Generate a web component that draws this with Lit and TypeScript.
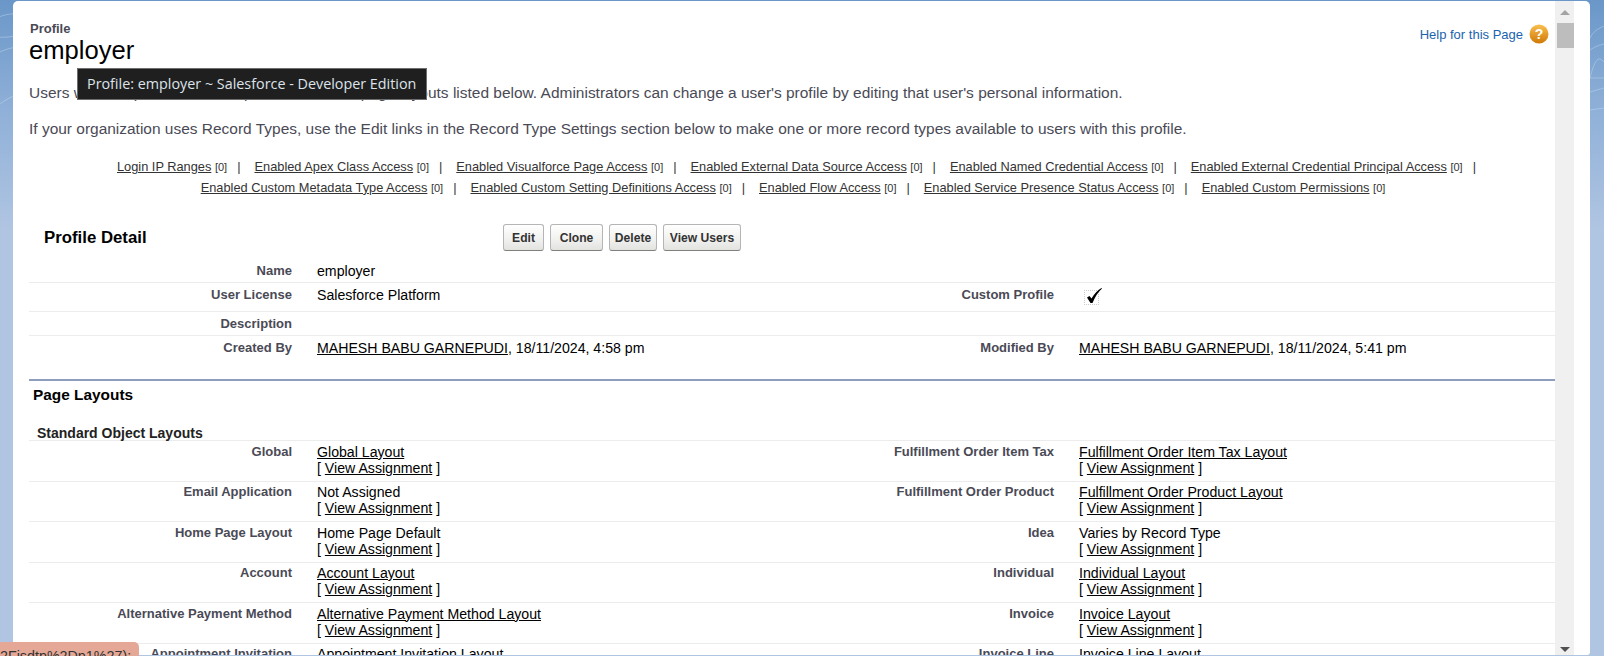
import { LitElement, html, css, svg } from "lit";
import { customElement } from "lit/decorators.js";

const links1 = [
  "Login IP Ranges",
  "Enabled Apex Class Access",
  "Enabled Visualforce Page Access",
  "Enabled External Data Source Access",
  "Enabled Named Credential Access",
  "Enabled External Credential Principal Access",
];
const links2 = [
  "Enabled Custom Metadata Type Access",
  "Enabled Custom Setting Definitions Access",
  "Enabled Flow Access",
  "Enabled Service Presence Status Access",
  "Enabled Custom Permissions",
];

type Cell = { label: string; value: string; link: boolean };
const layouts: [Cell, Cell][] = [
  [{ label: "Global", value: "Global Layout", link: true }, { label: "Fulfillment Order Item Tax", value: "Fulfillment Order Item Tax Layout", link: true }],
  [{ label: "Email Application", value: "Not Assigned", link: false }, { label: "Fulfillment Order Product", value: "Fulfillment Order Product Layout", link: true }],
  [{ label: "Home Page Layout", value: "Home Page Default", link: false }, { label: "Idea", value: "Varies by Record Type", link: false }],
  [{ label: "Account", value: "Account Layout", link: true }, { label: "Individual", value: "Individual Layout", link: true }],
  [{ label: "Alternative Payment Method", value: "Alternative Payment Method Layout", link: true }, { label: "Invoice", value: "Invoice Layout", link: true }],
  [{ label: "Appointment Invitation", value: "Appointment Invitation Layout", link: true }, { label: "Invoice Line", value: "Invoice Line Layout", link: true }],
];

@customElement("app-root")
export class AppRoot extends LitElement {
  static styles = css`
    :host {
      display: block;
      width: 1604px;
      height: 656px;
      position: relative;
      overflow: hidden;
      font-family: "Liberation Sans", Arial, sans-serif;
      background: linear-gradient(180deg, #6a97c8 0%, #8fb0d8 110px, #b0c5e2 230px, #b0c5e2 100%);
    }
    .swirl { position: absolute; inset: 0; width: 1604px; height: 300px; }
    .card {
      position: absolute;
      left: 13px;
      top: 1px;
      width: 1577px;
      height: 654px;
      background: #fff;
      border-radius: 5px 5px 3px 3px;
      display: flex;
      overflow: hidden;
    }
    .content {
      width: 1542px;
      flex: none;
      overflow: hidden;
      color: #000;
      font-size: 14.15px;
    }
    .sb {
      width: 19px;
      flex: none;
      background: #f0f0f0;
      display: flex;
      flex-direction: column;
      align-items: center;
      position: relative;
    }
    .sb-up { margin-top: 9px; width: 0; height: 0; border-left: 5px solid transparent; border-right: 5px solid transparent; border-bottom: 5px solid #a3a3a3; }
    .sb-thumb { margin: 8px 0 0 2px; width: 17px; height: 25px; background: #bdbdbd; }
    .sb-down { margin-top: auto; margin-bottom: 3px; width: 0; height: 0; border-left: 5px solid transparent; border-right: 5px solid transparent; border-top: 5px solid #505050; }

    .head { display: flex; justify-content: space-between; padding: 21px 6px 0 16px; height: 46px; box-sizing: content-box; }
    .kicker { font-size: 13px; font-weight: 700; color: #4a4a56; line-height: 14px; margin-left: 1px; }
    .title { font-size: 25.6px; line-height: 30px; color: #000; margin-top: -1px; }
    .help { display: flex; align-items: center; gap: 6px; height: 24px; }
    .help a { font-size: 13px; color: #1a63ae; text-decoration: none; }

    .para { margin: 0 0 0 16px; color: #4a4a56; font-size: 15.47px; line-height: 16px; }
    .p1 { margin-top: 17px; }
    .p2 { margin-top: 20px; }

    .rel { margin-top: 20px; text-align: center; color: #333; font-size: 12.8px; line-height: 20.5px; padding: 0 0 0 18px; }
    .rel a { color: #333; text-decoration: underline; }
    .rel .n { font-size: 11px; }
    .rel .sep { margin: 0 14px 0 10px; }
    .rel .last { margin-right: 0; }
    .rel .first { padding-left: 7px; }

    .pd { display: flex; align-items: center; margin: 26px 0 0 0; height: 27px; padding-left: 31px; }
    .pd h2 { margin: 0; width: 459px; font-size: 16.8px; line-height: 20px; font-weight: 700; color: #000; }
    .btns { display: flex; gap: 6px; }
    .btn {
      font: 700 12.1px "Liberation Sans", Arial, sans-serif;
      color: #333;
      height: 27px;
      padding: 0;
      box-sizing: border-box;
      border: 1px solid #b5b5b5;
      border-bottom-color: #7f7f7f;
      border-radius: 3px;
      background: linear-gradient(#fff, #f0f0ee 60%, #e2e2df);
    }
    .b-edit { width: 41px; }
    .b-clone { width: 53px; }
    .b-delete { width: 48px; }
    .b-users { width: 78px; }

    .detail { margin: 7px 0 0 16px; }
    .row {
      display: grid;
      grid-template-columns: 263px 500px 262px 1fr;
      border-bottom: 1px solid #ececec;
      box-sizing: border-box;
      line-height: 16px;
    }
    .row:last-child { border-bottom: none; }
    .r1 { height: 25px; padding-top: 5px; }
    .r2 { height: 29px; padding-top: 4px; }
    .r3 { height: 24px; padding-top: 4px; }
    .r4 { height: 24px; padding-top: 4px; }
    .l { font-size: 13px; font-weight: 700; color: #4a4a56; text-align: right; line-height: 16px; }
    .v { padding-left: 25px; color: #000; white-space: nowrap; }
    .v a { color: #000; text-decoration: underline; }

    .sect { margin: 19px 0 0 16px; border-top: 2px solid #8e9dbe; padding: 5px 0 0 4px; font-size: 15.4px; font-weight: 700; line-height: 17px; color: #000; }
    .sub { margin: 22px 0 0 24px; font-size: 14px; font-weight: 700; color: #222; line-height: 16px; }
    .layouts { margin: -1px 0 0 16px; border-top: 1px solid #ececec; }
    .lrow { display: grid; grid-template-columns: 263px 500px 262px 1fr; border-bottom: 1px solid #ececec; height: 40.5px; box-sizing: border-box; padding-top: 2.5px; line-height: 16.2px; }
    .chk { display: inline-block; margin: 3px 0 0 5px; width: 15px; height: 15px; border: 1px dotted #ccc; box-sizing: border-box; position: relative; }
    .chk svg { position: absolute; left: -1px; top: -5px; }

    .tip {
      position: absolute;
      left: 77px;
      top: 68px;
      width: 350px;
      height: 32px;
      box-sizing: border-box;
      background: #1f1f1f;
      border: 1px solid #6e6e6e;
      color: #dde3ea;
      font: 14.35px "Open Sans", "Liberation Sans", sans-serif;
      line-height: 29px;
      padding-left: 9px;
      white-space: nowrap;
    }
    .status {
      position: absolute;
      left: 0;
      top: 642px;
      width: 139px;
      height: 14px;
      background: #e5a896;
      border-top-right-radius: 5px;
      font-size: 14.3px;
      line-height: 28px;
      color: #333;
      white-space: nowrap;
      overflow: hidden;
    }
  `;

  private swirl() {
    const strokes = [
      "M-10 22 C 6 10 30 12 40 22 C 30 34 10 40 -10 36",
      "M-10 58 C 6 46 26 44 40 50",
      "M0 104 C 10 96 24 92 34 86",
      "M1590 38 C 1594 30 1600 28 1604 26",
      "M1590 50 C 1596 46 1600 45 1604 44",
      "M1590 78 C 1596 54 1600 58 1604 62 M1590 78 L1604 78",
      "M1590 92 L1604 88",
      "M1590 110 L1604 108",
    ];
    return svg`<svg class="swirl" viewBox="0 0 1604 300" fill="none" stroke="#cfe0f2" stroke-opacity=".4" stroke-width="1">${strokes.map(
      (d) => svg`<path d=${d}></path>`
    )}</svg>`;
  }

  private links(list: string[], trailing: boolean) {
    return list.map((t, i) => {
      const isLast = i === list.length - 1;
      return html`<a>${t}</a> <span class="n">[0]</span>${!isLast || trailing
        ? html`<span class=${isLast ? "sep last" : "sep"}>|</span>`
        : ""}`;
    });
  }

  render() {
    const assign = html`[ <a>View Assignment</a> ]`;
    const cell = (c: Cell) => html`
      <div class="l">${c.label}</div>
      <div class="v">${c.link ? html`<a>${c.value}</a>` : c.value}<br />${assign}</div>
    `;
    return html`
      ${this.swirl()}
      <div class="card">
        <div class="content">
          <div class="head">
            <div>
              <div class="kicker">Profile</div>
              <div class="title">employer</div>
            </div>
            <div class="help">
              <a>Help for this Page</a>
              <svg width="20" height="20" viewBox="0 0 20 20">
                <defs>
                  <linearGradient id="hg" x1="0" y1="0" x2="0" y2="1">
                    <stop offset="0" stop-color="#f8c050"></stop>
                    <stop offset="1" stop-color="#d07805"></stop>
                  </linearGradient>
                </defs>
                <circle cx="10" cy="10" r="9.5" fill="url(#hg)"></circle>
                <text x="10" y="15" text-anchor="middle" font-family="Liberation Sans" font-weight="700" font-size="14" fill="#fff">?</text>
              </svg>
            </div>
          </div>

          <p class="para p1">Users with this profile have the permissions and page layouts listed below. Administrators can change a user's profile by editing that user's personal information.</p>
          <p class="para p2">If your organization uses Record Types, use the Edit links in the Record Type Settings section below to make one or more record types available to users with this profile.</p>

          <div class="rel">
            <div class="first">${this.links(links1, true)}</div>
            <div>${this.links(links2, false)}</div>
          </div>

          <div class="pd">
            <h2>Profile Detail</h2>
            <div class="btns">
              <button class="btn b-edit">Edit</button>
              <button class="btn b-clone">Clone</button>
              <button class="btn b-delete">Delete</button>
              <button class="btn b-users">View Users</button>
            </div>
          </div>

          <div class="detail">
            <div class="row r1">
              <div class="l">Name</div><div class="v">employer</div><div></div><div></div>
            </div>
            <div class="row r2">
              <div class="l">User License</div><div class="v">Salesforce Platform</div>
              <div class="l">Custom Profile</div>
              <div class="v"><span class="chk"><svg width="20" height="20" viewBox="0 0 20 20"><path d="M3 11.5 L5.5 10 L7.5 12.5 C10 8 14 4 17.5 2 L18 2.5 C14 6 11 11 8.5 17 L6.5 17 Z" fill="#000"></path></svg></span></div>
            </div>
            <div class="row r3">
              <div class="l">Description</div><div class="v"></div><div></div><div></div>
            </div>
            <div class="row r4">
              <div class="l">Created By</div>
              <div class="v"><a>MAHESH BABU GARNEPUDI</a>, 18/11/2024, 4:58 pm</div>
              <div class="l">Modified By</div>
              <div class="v"><a>MAHESH BABU GARNEPUDI</a>, 18/11/2024, 5:41 pm</div>
            </div>
          </div>

          <div class="sect">Page Layouts</div>
          <div class="sub">Standard Object Layouts</div>
          <div class="layouts">
            ${layouts.map(([a, b]) => html`<div class="lrow">${cell(a)}${cell(b)}</div>`)}
          </div>
        </div>
        <div class="sb">
          <div class="sb-up"></div>
          <div class="sb-thumb"></div>
          <div class="sb-down"></div>
        </div>
      </div>
      <div class="tip">Profile: employer ~ Salesforce - Developer Edition</div>
      <div class="status">2Fisdtp%2Dp1%27);</div>
    `;
  }
}
